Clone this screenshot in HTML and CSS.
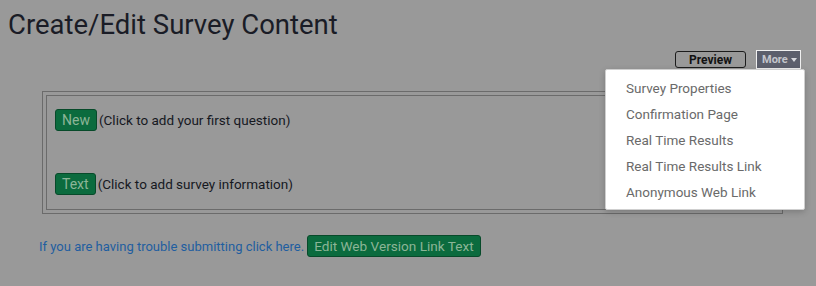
FILE: index.html
```html
<!DOCTYPE html>
<html lang="en">
<head>
    <meta charset="UTF-8">
    <meta name="viewport" content="width=device-width, initial-scale=1.0">
    <title>Create/Edit Survey Content</title>
    <link rel="stylesheet" href="styles.css">
</head>
<body>

    <div class="page">
        <h1>Create/Edit Survey Content</h1>

        <!-- Preview / More actions -->
        <div class="toolbar">
            <button class="btn-preview">Preview</button>
            <div class="more-wrap">
                <button class="btn-more">More <span class="caret"></span></button>
                <ul class="menu">
                    <li>Survey Properties</li>
                    <li>Confirmation Page</li>
                    <li>Real Time Results</li>
                    <li>Real Time Results Link</li>
                    <li>Anonymous Web Link</li>
                </ul>
            </div>
        </div>

        <!-- Survey content box -->
        <div class="survey-box">
            <div class="survey-inner">
                <div class="row">
                    <button class="btn-green">New</button>
                    <span>(Click to add your first question)</span>
                </div>
                <div class="row">
                    <button class="btn-green">Text</button>
                    <span>(Click to add survey information)</span>
                </div>
            </div>
        </div>

        <div class="footer">
            <a href="#" class="trouble">If you are having trouble submitting click here.</a>
            <button class="btn-green btn-edit">Edit Web Version Link Text</button>
        </div>
    </div>

</body>
</html>
```

FILE: styles.css
```css
body {
    margin: 0;
    background-color: #999999;
    font-family: Roboto, "Noto Sans", sans-serif;
    color: #16181f;
}

.page {
    padding: 0 8px;
}

h1 {
    margin: 0;
    padding-top: 8px;
    font-size: 27.5px;
    font-weight: 400;
    line-height: 34px;
    color: #1a1c26;
}

.toolbar {
    display: flex;
    justify-content: flex-end;
    align-items: center;
    gap: 10px;
    margin-top: 8px;
    padding-right: 7px;
    height: 19px;
}

.btn-preview {
    height: 17px;
    width: 71px;
    padding: 0;
    font-family: inherit;
    font-size: 12px;
    font-weight: 700;
    color: #111;
    background: #999999;
    border: 1px solid #1c1c1c;
    border-radius: 3px;
}

.more-wrap {
    position: relative;
}

.btn-more {
    display: flex;
    align-items: center;
    gap: 3px;
    height: 19px;
    width: 45px;
    padding: 0 0 0 5px;
    font-family: inherit;
    font-size: 11px;
    font-weight: 700;
    color: #c4c6cc;
    background: #5c5f6c;
    border: 1px solid #f0f0f0;
}

.caret {
    width: 0;
    height: 0;
    border-left: 3px solid transparent;
    border-right: 3px solid transparent;
    border-top: 4px solid #d8d9de;
}

.menu {
    position: absolute;
    top: 19px;
    right: -4px;
    width: 198px;
    margin: 0;
    padding: 5px 0 4px;
    list-style: none;
    background: #fff;
    border: 1px solid #cfcfcf;
    border-radius: 2px;
    box-shadow: 0 2px 6px rgba(0, 0, 0, 0.2);
    z-index: 10;
}

.menu li {
    padding: 0 20px;
    line-height: 26px;
    font-size: 13.5px;
    color: #6a6a6a;
}

.survey-box {
    margin: 22px 25px 0 34px;
    padding: 3px;
    border: 1px solid #6b6b6b;
}

.survey-inner {
    border: 1px solid #6b6b6b;
    padding: 13px 8px 14px;
}

.row {
    display: flex;
    align-items: center;
    gap: 2px;
    font-size: 13.5px;
    color: #16181f;
}

.row + .row {
    margin-top: 42px;
}

.btn-green {
    height: 22px;
    padding: 0 6px;
    font-family: inherit;
    font-size: 14px;
    color: #8bb597;
    background: #0b6b3e;
    border: 1px solid #074a2a;
    border-radius: 3px;
}

.btn-edit {
    font-size: 13.6px;
}

.footer {
    display: flex;
    align-items: center;
    gap: 3px;
    margin-top: 21px;
    padding-left: 31px;
}

.trouble {
    font-size: 13px;
    color: #1f5ea0;
    text-decoration: none;
}
```
